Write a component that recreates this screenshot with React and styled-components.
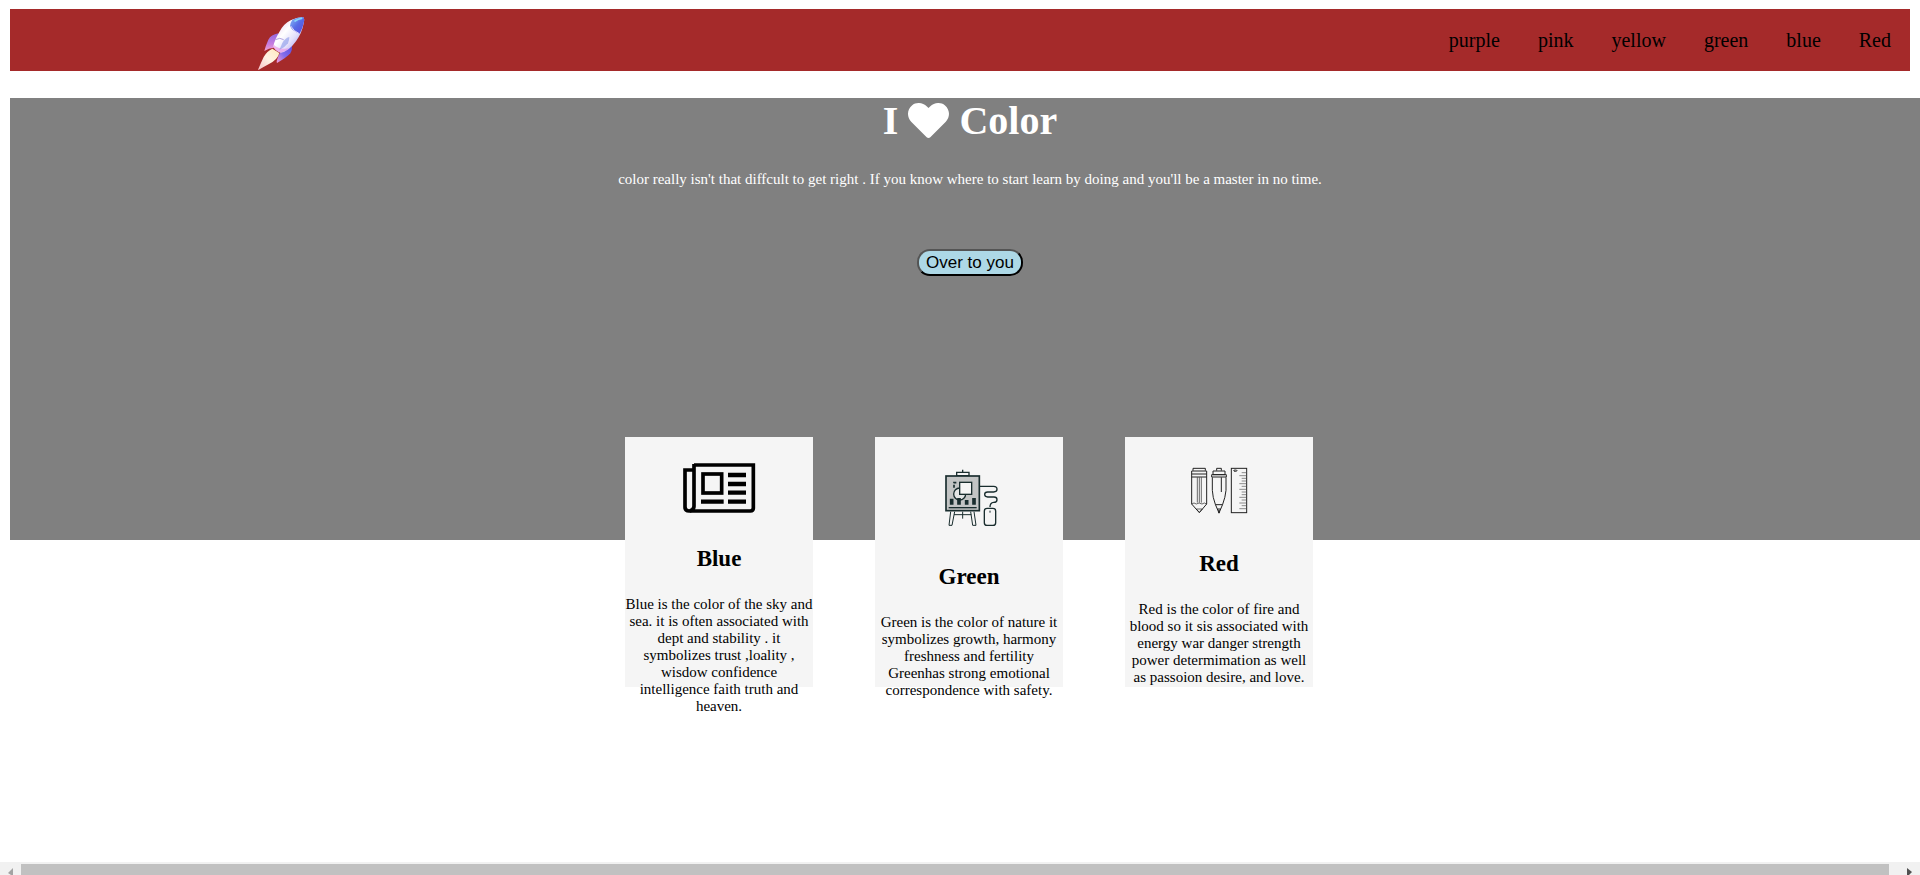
import React from "react";
import styled, { createGlobalStyle } from "styled-components";

const GlobalStyle = createGlobalStyle`
  *, *::before, *::after { box-sizing: border-box; }
  body {
    margin: 0;
    background: #ffffff;
    color: #000000;
    font-family: "Liberation Serif", "Times New Roman", serif;
  }
`;

const Page = styled.div`
  display: flex;
  flex-direction: column;
  min-height: 100vh;
  overflow: hidden;
`;

const Content = styled.div`
  flex: 1;
  padding: 9px 10px 0;
`;

const NavBar = styled.nav`
  display: flex;
  align-items: center;
  justify-content: space-between;
  height: 62px;
  padding-left: 13%;
  background: brown;
`;

const LogoLink = styled.a`
  display: flex;
  align-self: flex-end;
`;

const NavList = styled.ul`
  display: flex;
  margin: 0;
  padding: 0;
  list-style: none;
`;

const NavLink = styled.a`
  display: block;
  padding: 0 19px;
  color: #000000;
  font-size: 20px;
  line-height: 24px;
  text-decoration: none;
`;

const Main = styled.main`
  width: calc(100% + 20px);
  margin-top: 27px;
`;

const Hero = styled.section`
  display: flex;
  flex-direction: column;
  align-items: center;
  min-height: 442px;
  padding-bottom: 103px;
  background: gray;
  color: #ffffff;
  text-align: center;
`;

const HeroTitle = styled.h1`
  display: flex;
  gap: 10px;
  margin: 0 0 27px;
  font-size: 40px;
  line-height: 46px;
`;

const HeartIcon = styled.svg`
  width: 41px;
  height: 35px;
  margin-top: 5px;
`;

const HeroText = styled.p`
  margin: 0 0 61px;
  font-size: 15px;
  line-height: 17px;
`;

const HeroButton = styled.button`
  height: 27px;
  padding: 0 7px;
  border: 2px outset #000000;
  border-radius: 13px;
  background: lightblue;
  color: #000000;
  font-family: "Liberation Sans", Arial, sans-serif;
  font-size: 17px;
  line-height: 20px;
`;

const CardRow = styled.section`
  display: flex;
  justify-content: center;
  gap: 62px;
  margin-top: -103px;
  padding-right: 2px;
`;

const Card = styled.article`
  width: 188px;
  height: 250px;
  background: whitesmoke;
  text-align: center;
`;

const CardArt = styled.svg`
  display: block;
  width: 120px;
  height: ${({ $height }) => $height}px;
  margin: 0 auto;
`;

const CardTitle = styled.h2`
  margin: 19px 0 24px;
  font-size: 23px;
  line-height: 26px;
`;

const CardText = styled.p`
  margin: 0;
  font-size: 15px;
  line-height: 17px;
`;

const ScrollTrack = styled.div`
  display: flex;
  justify-content: space-between;
  height: 13px;
  padding-top: 2px;
  background: #f1f1f1;
`;

const ScrollThumb = styled.div`
  flex: 1;
  background: #c1c1c1;
`;

const ScrollArrow = styled.svg`
  width: ${({ $width }) => $width}px;
  height: 11px;
`;

function Rocket() {
  return (
    <svg width="49" height="55" viewBox="80 48 147 165" role="img" aria-label="Rocket">
      <defs>
        <linearGradient id="rocketBody" x1="0" y1="0" x2="1" y2="1">
          <stop offset="0.15" stopColor="#e9d5f5" />
          <stop offset="0.4" stopColor="#ffffff" />
          <stop offset="0.62" stopColor="#e4e0fb" />
          <stop offset="0.85" stopColor="#a9a2ee" />
        </linearGradient>
        <linearGradient id="rocketNose" x1="0" y1="0" x2="1" y2="1">
          <stop offset="0" stopColor="#8cc0f8" />
          <stop offset="0.5" stopColor="#566be6" />
          <stop offset="1" stopColor="#5a48dc" />
        </linearGradient>
        <linearGradient id="rocketFin" x1="0" y1="0" x2="0" y2="1">
          <stop offset="0" stopColor="#9168dd" />
          <stop offset="0.6" stopColor="#c67de0" />
          <stop offset="1" stopColor="#f3a0cd" />
        </linearGradient>
        <linearGradient id="rocketFinRight" x1="1" y1="0" x2="0" y2="1">
          <stop offset="0" stopColor="#5a49dc" />
          <stop offset="0.55" stopColor="#806cec" />
          <stop offset="1" stopColor="#fa9bd5" />
        </linearGradient>
        <linearGradient id="rocketFlame" x1="1" y1="0" x2="0" y2="1">
          <stop offset="0" stopColor="#ffe8bb" />
          <stop offset="0.5" stopColor="#fff3e4" />
          <stop offset="1" stopColor="#f6c2c8" />
        </linearGradient>
      </defs>
      <path d="M144 100Q122 104 114 119Q106 137 102 153Q115 144 132 143L146 113Z" fill="url(#rocketFin)" />
      <path d="M183 132Q188 148 180 160Q170 172 140 189Q136 184 149 158Z" fill="url(#rocketFinRight)" />
      <path d="M126 146Q110 153 100 171Q92 188 84 207Q82 212 88 208Q101 200 116 192Q143 178 147 159Z" fill="url(#rocketFlame)" />
      <path d="M218 51Q224 55 220 70Q215 99 197 124Q174 156 151 158Q135 154 129 139Q133 119 147 96Q160 71 181 61Q199 52 218 51Z" fill="url(#rocketBody)" />
      <path d="M130 134Q145 150 177 145Q164 157 151 158Q135 154 129 139Z" fill="#e98ae2" opacity="0.6" />
      <path d="M186 59Q203 51 218 51Q224 55 220 70Q217 86 208 101Q187 94 179 79Q180 67 186 59Z" fill="url(#rocketNose)" />
      <path d="M181 78Q190 94 207 101" fill="none" stroke="#ded3fc" strokeWidth="3" />
      <path d="M194 63Q203 56 214 55" fill="none" stroke="#87d5fa" strokeWidth="5" strokeLinecap="round" />
      <path d="M177 111Q163 115 156 129L147 150Q164 142 173 130Q177 120 177 111Z" fill="#8797e7" opacity="0.6" />
      <path d="M135 119Q149 111 160 119" fill="none" stroke="#b2a3df" strokeWidth="3" />
    </svg>
  );
}

function Newspaper() {
  return (
    <CardArt $height={90} viewBox="117 21 360 270" aria-hidden="true">
      <g fill="none" stroke="#000000">
        <path d="M222 105H400V234Q400 243 391 243H207Q195 243 195 231V120H222" strokeWidth="11" />
        <path d="M222 102V229Q222 240 209 243" strokeWidth="11" />
        <rect x="249" y="132" width="56" height="57" strokeWidth="11" />
        <path d="M324 135H378M324 162H378M324 188H378M324 215H378M243 215H311" strokeWidth="13" />
      </g>
    </CardArt>
  );
}

function Easel() {
  return (
    <CardArt $height={108} viewBox="117 21 360 324" aria-hidden="true">
      <g fill="none" stroke="#192d2e" strokeWidth="4">
        <path d="M278 119V129M260 127H297V137H260Z" />
        <path d="M242 245L237 286H246L254 245M302 245L308 286H318L312 245M252 254H304M278 245V266" strokeWidth="3" />
        <rect x="228" y="138" width="100" height="104" fill="#c2c4c4" strokeWidth="5" />
        <path d="M252 173V158H263" strokeWidth="5" strokeDasharray="9 4" />
        <circle cx="269" cy="192" r="18" fill="#e4e6e6" />
        <rect x="269" y="157" width="36" height="36" fill="#f5f5f5" />
        <path d="M245 206V224M267 204V224M290 210V224M312 204V224" strokeWidth="11" />
        <path d="M236 233H320" />
        <path d="M330 169H371Q381 169 381 178Q381 186 371 186H353Q344 186 344 193Q344 201 353 201H372Q381 201 381 209Q381 217 371 217Q360 218 360 231" />
        <rect x="343" y="235" width="34" height="51" rx="8" />
        <path d="M360 242V248" strokeWidth="3" />
      </g>
    </CardArt>
  );
}

function DrawingTools() {
  return (
    <CardArt $height={95} viewBox="117 21 360 285" aria-hidden="true">
      <g fill="none" stroke="#222222" strokeWidth="3">
        <path d="M219 122V115H256V122M215 123H260V222L238 248L215 222ZM215 132H260M215 141H260" />
        <path d="M232 142V218M238 142V218M244 142V218" strokeWidth="2" />
        <path d="M215 222Q222 216 229 222Q237 216 246 222Q253 216 260 222M229 237H247L238 247Z" strokeWidth="2" />
        <path d="M290 122V115H304V122M279 123H315V134H279ZM275 134H319V141H275Z" />
        <path d="M277 142V181Q278 202 286 223L297 249L308 223Q316 202 318 181V142M286 224H308M292 237H302M304 142V186" />
        <path d="M297 239V250" strokeWidth="4" />
        <rect x="334" y="115" width="46" height="133" />
        <ellipse cx="346" cy="122" rx="5" ry="2" />
        <path d="M365 128H379M358 137H379M365 145H379M365 153H379M358 161H379M365 169H379M358 178H379M365 186H379M365 194H379M358 202H379M365 210H379M358 219H379M365 227H379M358 236H379" strokeWidth="2" stroke="#555555" />
      </g>
    </CardArt>
  );
}

const colors = ["purple", "pink", "yellow", "green", "blue", "Red"];

const cards = [
  {
    title: "Blue",
    Art: Newspaper,
    text: "Blue is the color of the sky and sea. it is often associated with dept and stability . it symbolizes trust ,loality , wisdow confidence intelligence faith truth and heaven.",
  },
  {
    title: "Green",
    Art: Easel,
    text: "Green is the color of nature it symbolizes growth, harmony freshness and fertility Greenhas strong emotional correspondence with safety.",
  },
  {
    title: "Red",
    Art: DrawingTools,
    text: "Red is the color of fire and blood so it sis associated with energy war danger strength power determimation as well as passoion desire, and love.",
  },
];

export default function App() {
  return (
    <Page>
      <GlobalStyle />
      <Content>
        <NavBar>
          <LogoLink href="#" aria-label="Home">
            <Rocket />
          </LogoLink>
          <NavList>
            {colors.map((color) => (
              <li key={color}>
                <NavLink href={`#${color}`}>{color}</NavLink>
              </li>
            ))}
          </NavList>
        </NavBar>
        <Main>
          <Hero>
            <HeroTitle>
              <span>I</span>
              <HeartIcon viewBox="0 0 512 448" preserveAspectRatio="none" role="img" aria-label="love">
                <path
                  fill="#ffffff"
                  d="M462.3 30.6C407.500 -16.100 326 -7.700 275.700 44.200L256 64.500L236.300 44.200C186.100 -7.700 104.500 -16.100 49.700 30.600C-13.100 84.100 -16.400 180.300 39.800 238.400L233.300 438.200C245.800 451.100 266.100 451.100 278.600 438.200L472.100 238.400C528.400 180.300 525.100 84.100 462.300 30.600Z"
                />
              </HeartIcon>
              <span>Color</span>
            </HeroTitle>
            <HeroText>
              color really isn't that diffcult to get right . If you know where to start learn by doing and you'll be a
              master in no time.
            </HeroText>
            <HeroButton type="button">Over to you</HeroButton>
          </Hero>
          <CardRow>
            {cards.map(({ title, Art, text }) => (
              <Card key={title} id={title}>
                <Art />
                <CardTitle>{title}</CardTitle>
                <CardText>{text}</CardText>
              </Card>
            ))}
          </CardRow>
        </Main>
      </Content>
      <ScrollTrack aria-hidden="true">
        <ScrollArrow $width={21} viewBox="0 0 21 11">
          <path d="M13 4V11H11L8 9Z" fill="#a3a3a3" />
        </ScrollArrow>
        <ScrollThumb />
        <ScrollArrow $width={31} viewBox="0 0 31 11">
          <path d="M18 4V11H20L23 8Z" fill="#505050" />
        </ScrollArrow>
      </ScrollTrack>
    </Page>
  );
}
